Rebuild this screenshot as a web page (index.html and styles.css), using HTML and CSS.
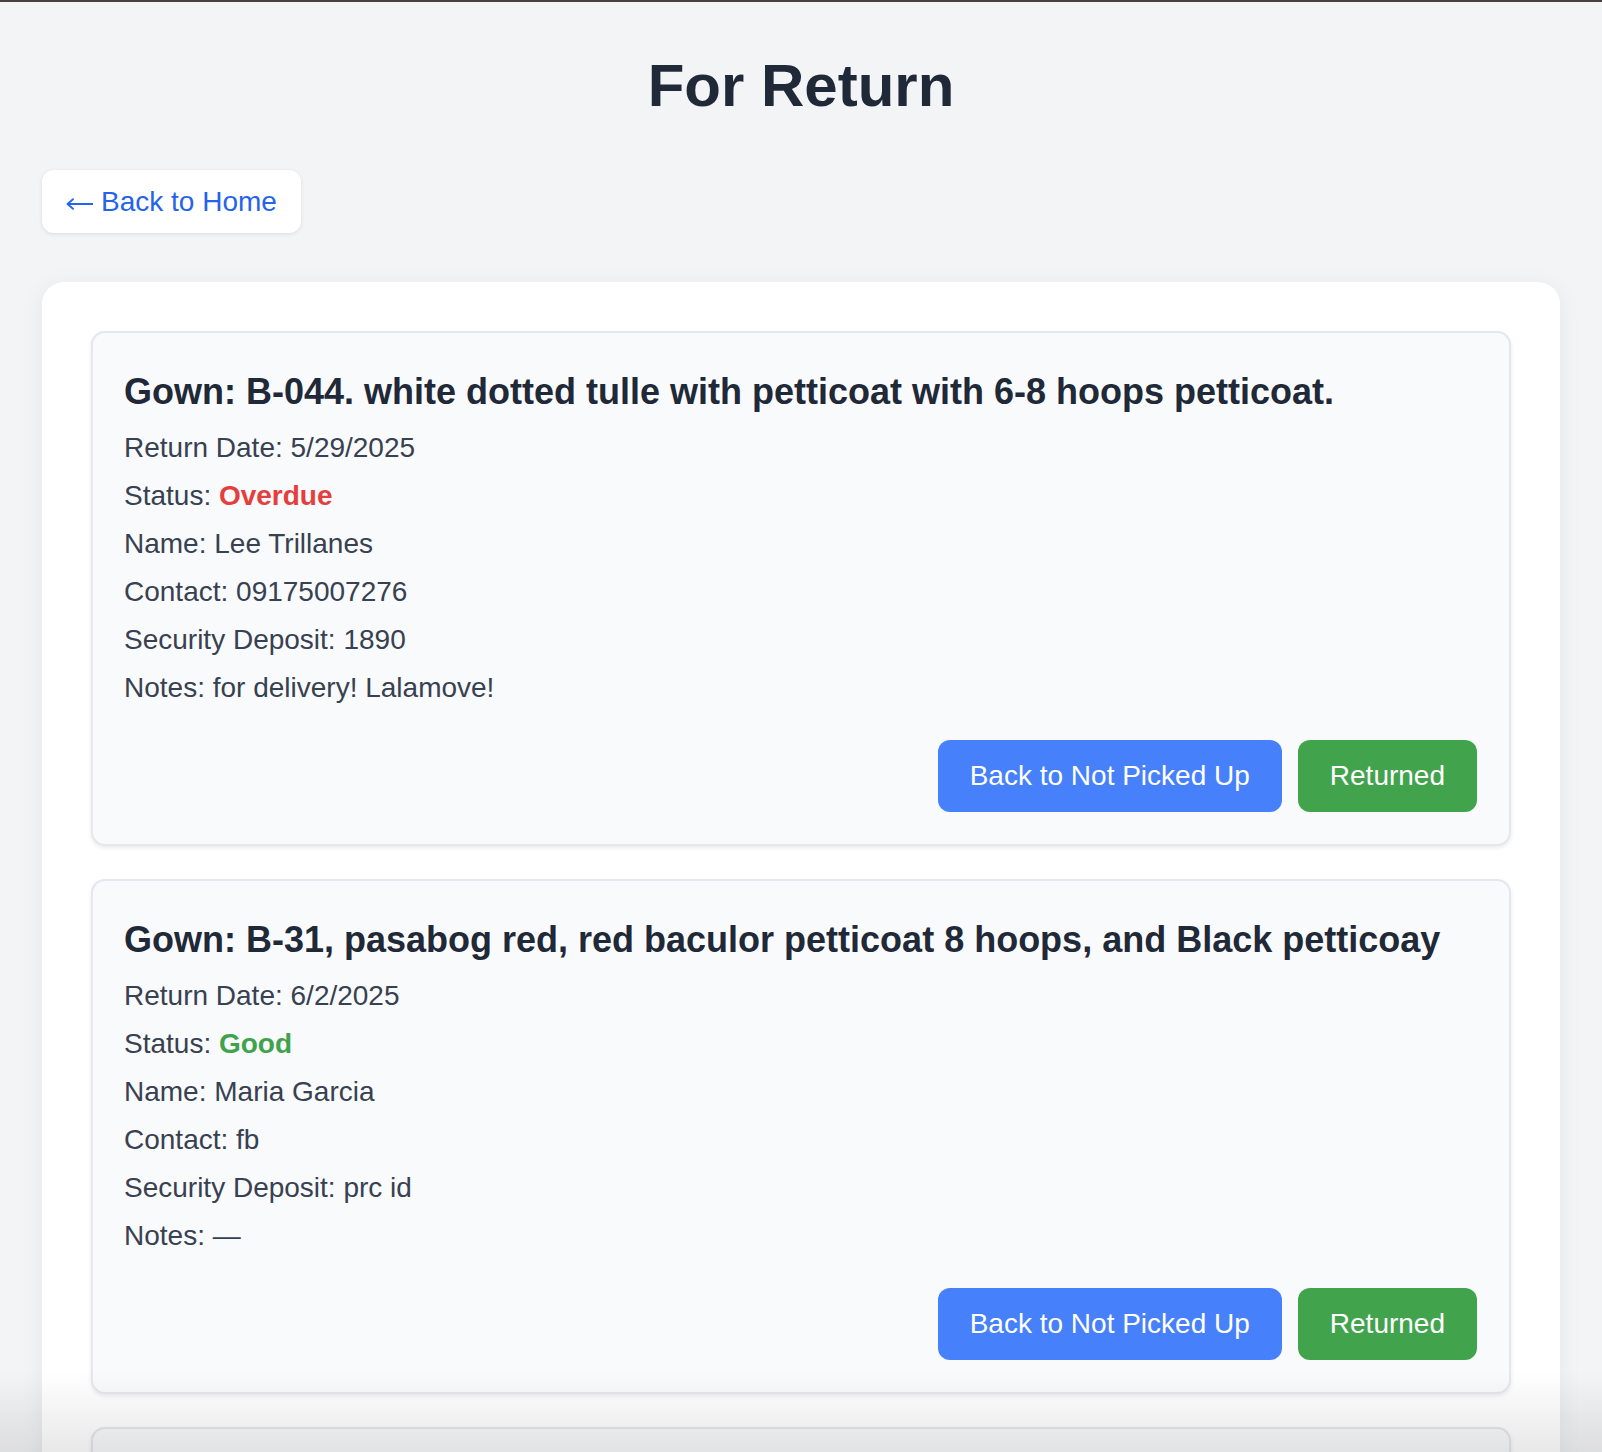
FILE: index.html
```html
<!DOCTYPE html>
<html lang="en">
<head>
<meta charset="utf-8">
<title>For Return</title>
<link rel="stylesheet" href="styles.css">
</head>
<body>
<div class="topline"></div>
<main class="page">
  <h1 class="page-title">For Return</h1>
  <div class="nav">
    <a class="back-link" href="#"><svg class="arrow" width="27" height="12" viewBox="0 0 27 12" aria-hidden="true"><path d="M26.5 6H1.5M7 1.2L1.5 6L7 10.8" fill="none" stroke="currentColor" stroke-width="1.8" stroke-linecap="round" stroke-linejoin="round"/></svg><span>Back to Home</span></a>
  </div>
  <section class="panel">
    <article class="card">
      <h3 class="card-title">Gown: B-044. white dotted tulle with petticoat with 6-8 hoops petticoat.</h3>
      <p class="row">Return Date: 5/29/2025</p>
      <p class="row">Status: <span class="status overdue">Overdue</span></p>
      <p class="row">Name: Lee Trillanes</p>
      <p class="row">Contact: 09175007276</p>
      <p class="row">Security Deposit: 1890</p>
      <p class="row">Notes: for delivery! Lalamove!</p>
      <div class="actions">
        <button class="btn btn-blue">Back to Not Picked Up</button>
        <button class="btn btn-green">Returned</button>
      </div>
    </article>
    <article class="card">
      <h3 class="card-title">Gown: B-31, pasabog red, red baculor petticoat 8 hoops, and Black petticoay</h3>
      <p class="row">Return Date: 6/2/2025</p>
      <p class="row">Status: <span class="status good">Good</span></p>
      <p class="row">Name: Maria Garcia</p>
      <p class="row">Contact: fb</p>
      <p class="row">Security Deposit: prc id</p>
      <p class="row">Notes: —</p>
      <div class="actions">
        <button class="btn btn-blue">Back to Not Picked Up</button>
        <button class="btn btn-green">Returned</button>
      </div>
    </article>
    <article class="card card-placeholder"></article>
  </section>
</main>
<div class="bottom-fade"></div>
</body>
</html>
```

FILE: styles.css
```css
html {
  scrollbar-width: none;
}
html::-webkit-scrollbar {
  display: none;
}
body {
  margin: 0;
  background: #f3f4f6;
  font-family: "Liberation Sans", Arial, Helvetica, sans-serif;
  color: #1f2937;
}
.topline {
  height: 2px;
  background: #47403f;
}
.page {
  padding: 0 42px 60px;
}
.page-title {
  margin: 50px 0 0;
  font-size: 60px;
  line-height: 67px;
  font-weight: 700;
  text-align: center;
  color: #1f2937;
}
.nav {
  display: flex;
  margin-top: 51px;
}
.back-link {
  display: inline-flex;
  align-items: center;
  gap: 8px;
  background: #ffffff;
  color: #2563eb;
  text-decoration: none;
  font-size: 28px;
  line-height: 31px;
  padding: 16px 24px;
  border-radius: 12px;
  box-shadow: 0 1px 4px rgba(0, 0, 0, 0.1);
}
.arrow {
  display: block;
  margin-top: 5px;
}
.panel {
  margin-top: 49px;
  background: #ffffff;
  border-radius: 22px;
  padding: 49px;
  box-shadow: 0 4px 24px rgba(0, 0, 0, 0.06);
  display: flex;
  flex-direction: column;
  gap: 33px;
}
.card {
  background: #f9fafb;
  border: 2px solid #e5e7eb;
  border-radius: 14px;
  padding: 32px 32px 32px 31px;
  box-shadow: 0 2px 4px rgba(0, 0, 0, 0.08);
}
.card-placeholder {
  min-height: 420px;
}
.card-title {
  margin: 0 0 5px;
  font-size: 36px;
  line-height: 54px;
  font-weight: 700;
  color: #1f2937;
}
.row {
  margin: 0;
  font-size: 28px;
  line-height: 48px;
  color: #374151;
}
.status {
  font-weight: 700;
}
.overdue {
  color: #e53e3e;
}
.good {
  color: #3fa34d;
}
.actions {
  display: flex;
  justify-content: flex-end;
  gap: 16px;
  margin-top: 28px;
}
.btn {
  font-family: "Liberation Sans", Arial, Helvetica, sans-serif;
  font-size: 28px;
  line-height: 32px;
  padding: 20px 32px;
  border: none;
  border-radius: 12px;
  color: #ffffff;
  cursor: pointer;
}
.btn-blue {
  background: #4680fb;
}
.btn-green {
  background: #41a44d;
}
.bottom-fade {
  position: fixed;
  left: 0;
  right: 0;
  bottom: 0;
  height: 80px;
  pointer-events: none;
  background: linear-gradient(to bottom, rgba(0, 0, 0, 0), rgba(0, 0, 0, 0.09));
}
```
